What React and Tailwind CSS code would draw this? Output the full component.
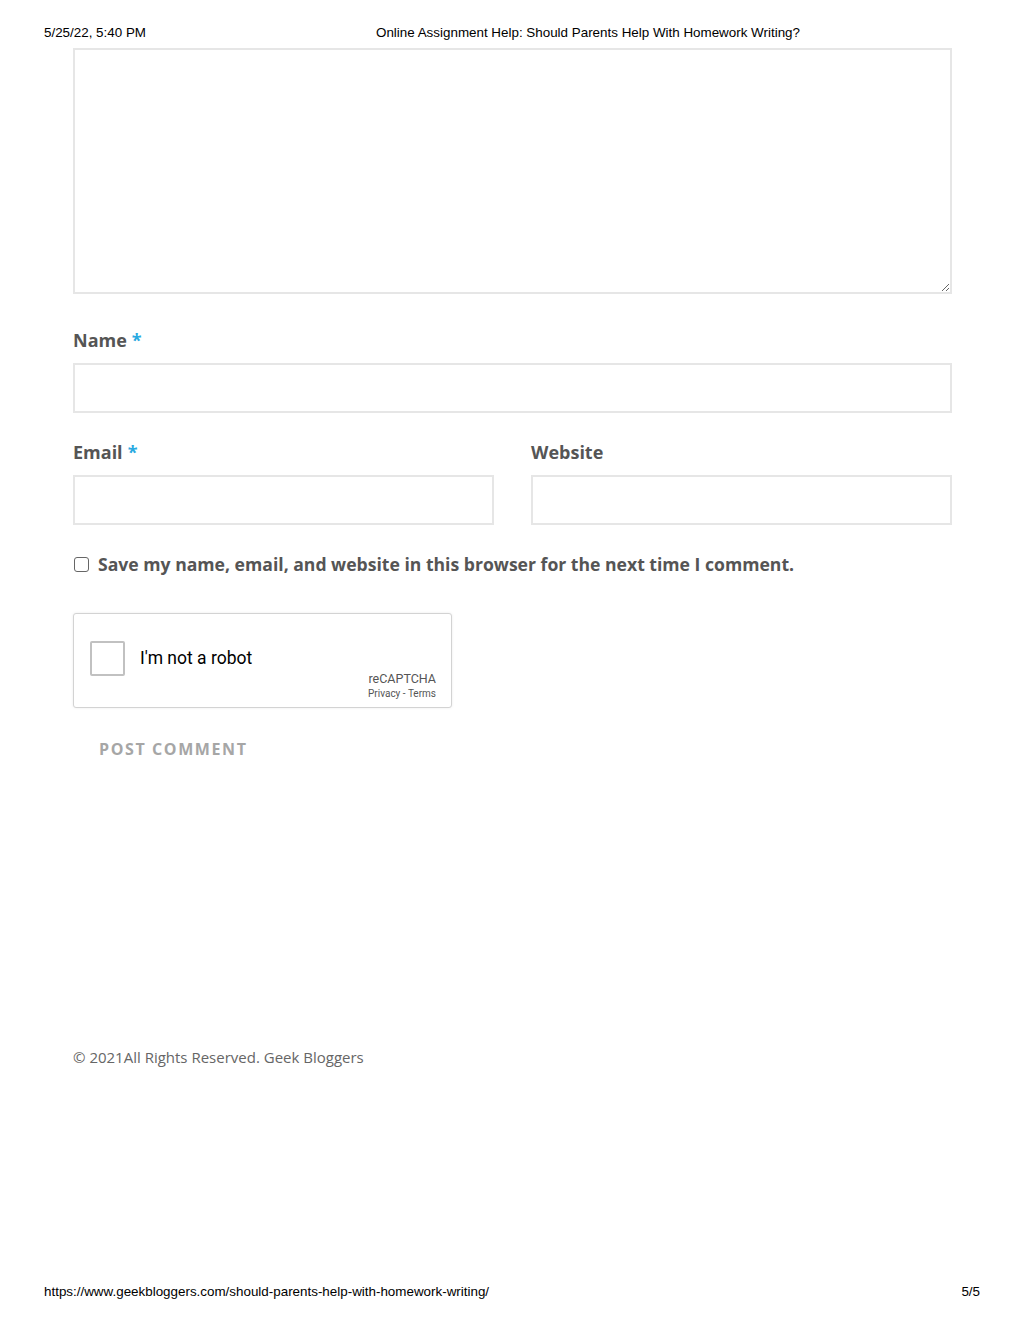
import React from "react"

const Label = ({ children, required }) => (
  <label className="block text-[18px] leading-[22px] font-bold text-[#555555]">
    {children}
    {required && <span className="ml-[5px] text-[#29a9e1]">*</span>}
  </label>
)

const Field = ({ className = "" }) => (
  <input
    type="text"
    className={`block w-full h-[50px] border-2 border-[#e6e6e6] bg-white outline-none ${className}`}
  />
)

const Recaptcha = () => (
  <div className="flex w-[379px] h-[95px] border border-[#d3d3d3] rounded-[3px] bg-white shadow-[0_0_3px_rgba(0,0,0,0.08)] font-['Roboto',sans-serif]">
    <div className="flex flex-1 items-center pl-[16px] pb-[4px]">
      <span className="block w-[35px] h-[35px] border-2 border-[#c1c1c1] rounded-[2px] bg-white"></span>
      <span className="ml-[15px] text-[17.5px] text-black leading-none">I'm not a robot</span>
    </div>
    <div className="flex flex-col items-end justify-end pr-[15px] pb-[6px]">
      <span className="text-[12.5px] leading-[16px] text-[#555555]">reCAPTCHA</span>
      <span className="text-[10px] leading-[14px] text-[#555555]">Privacy - Terms</span>
    </div>
  </div>
)

export default function App() {
  return (
    <div className="flex flex-col w-[1024px] h-[1325px] bg-white">
      {/* print header */}
      <div className="flex px-[44px] pt-[25px] text-[13.4px] leading-[15px] text-black font-['Liberation_Sans',Arial,sans-serif]">
        <span className="w-[332px]">5/25/22, 5:40 PM</span>
        <span>Online Assignment Help: Should Parents Help With Homework Writing?</span>
      </div>

      <div className="flex flex-col pl-[73px] pr-[72px] pt-[8px] font-['Open_Sans',sans-serif]">
        <textarea className="block w-full h-[246px] border-2 border-[#e6e6e6] bg-white outline-none"></textarea>

        <div className="mt-[35px]">
          <Label required>Name</Label>
          <div className="mt-[12px]">
            <Field />
          </div>
        </div>

        <div className="grid grid-cols-2 gap-x-[37px] mt-[28px]">
          <div>
            <Label required>Email</Label>
            <div className="mt-[12px]">
              <Field />
            </div>
          </div>
          <div>
            <Label>Website</Label>
            <div className="mt-[12px]">
              <Field />
            </div>
          </div>
        </div>

        <div className="flex items-center mt-[27px]">
          <span className="block ml-[1px] w-[15px] h-[15px] border-[1.5px] border-[#666666] rounded-[3px]"></span>
          <span className="ml-[9px] text-[17.6px] leading-[24px] font-bold text-[#555555]">
            Save my name, email, and website in this browser for the next time I comment.
          </span>
        </div>

        <div className="mt-[37px]">
          <Recaptcha />
        </div>

        <div className="mt-[31px] px-[26px] text-[16px] leading-[20px] font-bold tracking-[1.6px] text-[#a6a6a6]">
          POST COMMENT
        </div>

        <div className="mt-[287px] text-[15px] leading-[22px] text-[#666666]">
          © 2021All Rights Reserved. Geek Bloggers
        </div>
      </div>

      <div className="flex-1"></div>

      {/* print footer */}
      <div className="flex justify-between px-[44px] pb-[26px] text-[13.4px] leading-[15px] text-black font-['Liberation_Sans',Arial,sans-serif]">
        <span>https://www.geekbloggers.com/should-parents-help-with-homework-writing/</span>
        <span>5/5</span>
      </div>
    </div>
  )
}
